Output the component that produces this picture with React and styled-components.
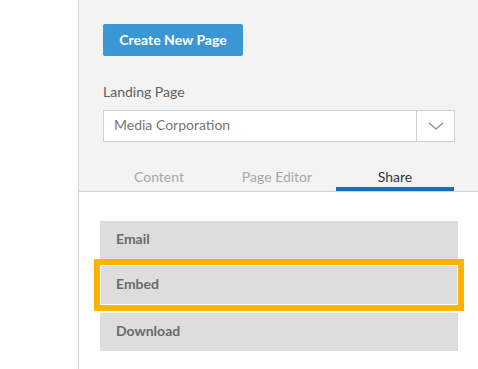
import React, { useState } from 'react'
import styled, { createGlobalStyle } from 'styled-components'

const GlobalStyle = createGlobalStyle`
  html, body {
    margin: 0;
    padding: 0;
    background: #fff;
    font-family: Lato, "Open Sans", sans-serif;
  }
`

const tabs = ['Content', 'Page Editor', 'Share']
const shareOptions = ['Email', 'Embed', 'Download']

function App() {
  const [activeTab, setActiveTab] = useState('Share')
  const [selected, setSelected] = useState('Embed')

  return (
    <>
      <GlobalStyle />
      <Layout>
        <Gutter />
        <Panel>
          <Header>
            <PrimaryButton>Create New Page</PrimaryButton>
            <Label>Landing Page</Label>
            <Select>
              <SelectValue>Media Corporation</SelectValue>
              <SelectToggle>
                <svg width="16" height="8" viewBox="0 0 16 8" fill="none">
                  <path d="M1 1l7 6 7-6" stroke="#8a8a8a" strokeWidth="1.3" />
                </svg>
              </SelectToggle>
            </Select>
            <Tabs>
              {tabs.map((t) => (
                <Tab key={t} $active={activeTab === t} onClick={() => setActiveTab(t)}>
                  {t}
                </Tab>
              ))}
            </Tabs>
          </Header>
          <OptionList>
            {shareOptions.map((o) => (
              <Option key={o} $selected={selected === o} onClick={() => setSelected(o)}>
                {o}
              </Option>
            ))}
          </OptionList>
        </Panel>
      </Layout>
    </>
  )
}

const Layout = styled.div`
  display: flex;
  width: 478px;
  height: 369px;
  overflow: hidden;
`

const Gutter = styled.div`
  width: 78px;
  flex-shrink: 0;
  background: #fff;
`

const Panel = styled.div`
  flex: 1;
  border-left: 1px solid #d4d4d4;
  display: flex;
  flex-direction: column;
`

const Header = styled.div`
  background: #f3f3f3;
  border-bottom: 1px solid #d4d4d4;
  padding: 24px 23px 0 24px;
  display: flex;
  flex-direction: column;
  align-items: flex-start;
`

const PrimaryButton = styled.button`
  height: 32px;
  width: 140px;
  border: none;
  border-radius: 2px;
  background: #3a97d4;
  color: #fff;
  font-family: inherit;
  font-size: 14px;
  font-weight: 700;
  padding: 0 0 2px;
  cursor: pointer;
`

const Label = styled.div`
  margin-top: 27px;
  font-size: 14px;
  line-height: 17px;
  color: #5f5f5f;
`

const Select = styled.div`
  margin-top: 10px;
  box-sizing: border-box;
  width: 100%;
  height: 32px;
  display: flex;
  background: #fff;
  border: 1px solid #d0d0d0;
`

const SelectValue = styled.div`
  flex: 1;
  padding: 0 0 2px 10px;
  font-size: 14px;
  line-height: 28px;
  color: #777;
`

const SelectToggle = styled.div`
  width: 37px;
  border-left: 1px solid #d0d0d0;
  display: flex;
  align-items: center;
  justify-content: center;
`

const Tabs = styled.div`
  margin: 26px 0 0 -3px;
  width: 354px;
  display: grid;
  grid-template-columns: repeat(3, 1fr);
`

const Tab = styled.div`
  text-align: center;
  font-size: 14px;
  line-height: 17px;
  padding-bottom: 2px;
  color: ${(p) => (p.$active ? '#333' : '#a8a8a8')};
  border-bottom: 4px solid ${(p) => (p.$active ? '#1a6fb6' : 'transparent')};
  cursor: pointer;
`

const OptionList = styled.div`
  padding: 29px 20px 0 21px;
  display: flex;
  flex-direction: column;
`

const Option = styled.div`
  box-sizing: border-box;
  height: ${(p) => (p.$selected ? '52px' : '38px')};
  margin: ${(p) => (p.$selected ? '0 -6px 2px' : '0')};
  padding: 0 0 3px 16px;
  background: #dddddd;
  border: ${(p) => (p.$selected ? '6px solid #fdb300' : 'none')};
  box-shadow: ${(p) => (p.$selected ? 'inset 0 0 0 1px #fff' : 'none')};
  display: flex;
  align-items: center;
  font-size: 14px;
  font-weight: 700;
  color: #6a6a6a;
  cursor: pointer;
`

export default App
